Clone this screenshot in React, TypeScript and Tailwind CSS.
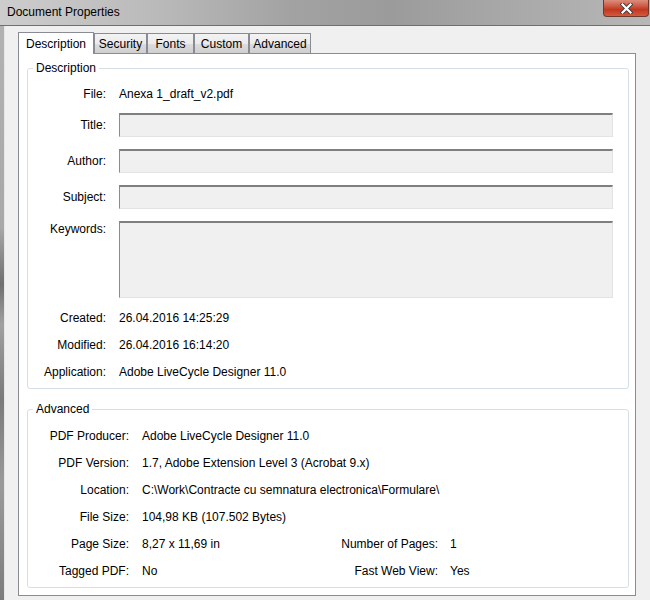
import React from 'react';

const font = "font-['Liberation_Sans',Arial,sans-serif]";

function Tab({ label, w, active }: { label: string; w: string; active?: boolean }) {
  if (active) {
    return (
      <div className={`${w} h-[22px] -mb-px relative z-10 bg-white border border-b-0 border-[#898c95] flex items-center justify-center text-[12px] text-black`}>
        {label}
      </div>
    );
  }
  return (
    <div className={`${w} h-[20px] border border-b-0 border-[#898c95] bg-[linear-gradient(to_bottom,#f3f3f3,#ebebeb_50%,#dddddd_51%,#cfcfcf)] flex items-center justify-center text-[12px] text-black`}>
      {label}
    </div>
  );
}

function Input({ h }: { h: string }) {
  return (
    <div className={`flex-1 ${h} bg-[#f0f0f0] border-t-2 border-l border-r border-b border-t-[#7f7f7f] border-l-[#8c8c8c] border-r-[#e3e3e3] border-b-[#e3e3e3]`} />
  );
}

function Row({ label, labelW, className, children, top }: { label: string; labelW: string; className: string; children: React.ReactNode; top?: boolean }) {
  return (
    <div className={`flex ${top ? 'items-start' : 'items-center'} ${className}`}>
      <div className={`${labelW} text-right shrink-0 leading-[16px]`}>{label}</div>
      {children}
    </div>
  );
}

function Group({ title, className, children }: { title: string; className: string; children: React.ReactNode }) {
  return (
    <fieldset className={`border border-[#d5dfe5] rounded-[3px] ml-[8px] mr-[6px] ${className}`}>
      <legend className="ml-[5px] px-[3px] leading-[16px] text-[12px] text-black">{title}</legend>
      {children}
    </fieldset>
  );
}

export default function App() {
  return (
    <div className={`w-[650px] h-[600px] flex flex-col bg-[#f0f0f0] overflow-hidden text-[12px] text-black ${font}`}>
      {/* title bar */}
      <div className="h-[26px] shrink-0 flex items-start border-b border-[#6f6f6f] bg-[linear-gradient(to_right,#cdcdcd,#b9b9b9_25%,#a2a2a2_45%,#9b9b9b_60%,#a6a6a6_75%,#b7b7b7)]">
        <div className="pl-[7px] leading-[24px] text-[12px] text-black">Document Properties</div>
        <div className="ml-auto mr-[1px] w-[46px] h-[17px] rounded-b-[4px] border border-t-0 border-[#6e3a30] bg-[linear-gradient(to_bottom,#dc8e7c,#cc5741_40%,#c0391f_60%,#d45a3f)] flex items-center justify-center">
          <svg width="13" height="11" viewBox="0 0 13 11">
            <path d="M2.5 1.5 L10.5 9.5 M10.5 1.5 L2.5 9.5" stroke="#3b3b3b" strokeWidth="4" strokeLinecap="square" />
            <path d="M2.5 1.5 L10.5 9.5 M10.5 1.5 L2.5 9.5" stroke="#ffffff" strokeWidth="2.2" strokeLinecap="square" />
          </svg>
        </div>
      </div>

      <div className="flex flex-1">
        {/* window frame edge */}
        <div className="w-[5px] shrink-0 border-r border-[#e6e6e6] bg-[linear-gradient(to_bottom,#b2b2b2,#a8a8a8_35%,#6f6f6f_45%,#a0a0a0_52%,#7a7a7a_65%,#9a9a9a_80%,#7c7c7c)]" />

        <div className="flex-1 pl-[13px] pr-[14px] pt-[6px]">
          <div className="flex items-end h-[21px]">
            <Tab label="Description" w="w-[76px]" active />
            <Tab label="Security" w="w-[53px]" />
            <Tab label="Fonts" w="w-[47px]" />
            <Tab label="Custom" w="w-[55px]" />
            <Tab label="Advanced" w="w-[62px]" />
          </div>

          <div className="h-[543px] bg-white border border-[#898c95] pt-[6px]">
            <Group title="Description" className="pb-[6px]">
              <Row label="File:" labelW="w-[78px]" className="mt-[8px] h-[20px]">
                <div className="ml-[13px]">Anexa 1_draft_v2.pdf</div>
              </Row>
              <Row label="Title:" labelW="w-[78px]" className="mt-[9px] h-[24px] pr-[15px] gap-[13px]">
                <Input h="h-[24px]" />
              </Row>
              <Row label="Author:" labelW="w-[78px]" className="mt-[12px] h-[24px] pr-[15px] gap-[13px]">
                <Input h="h-[24px]" />
              </Row>
              <Row label="Subject:" labelW="w-[78px]" className="mt-[12px] h-[24px] pr-[15px] gap-[13px]">
                <Input h="h-[24px]" />
              </Row>
              <Row label="Keywords:" labelW="w-[78px]" className="mt-[12px] h-[77px] pr-[15px] gap-[13px]" top>
                <Input h="h-[77px]" />
              </Row>
              <Row label="Created:" labelW="w-[78px]" className="mt-[10px] h-[20px]">
                <div className="ml-[13px]">26.04.2016 14:25:29</div>
              </Row>
              <Row label="Modified:" labelW="w-[78px]" className="mt-[7px] h-[20px]">
                <div className="ml-[13px]">26.04.2016 16:14:20</div>
              </Row>
              <Row label="Application:" labelW="w-[78px]" className="mt-[7px] h-[20px]">
                <div className="ml-[13px]">Adobe LiveCycle Designer 11.0</div>
              </Row>
            </Group>

            <Group title="Advanced" className="mt-[12px] pb-[6px]">
              <Row label="PDF Producer:" labelW="w-[101px]" className="mt-[9px] h-[20px]">
                <div className="ml-[13px]">Adobe LiveCycle Designer 11.0</div>
              </Row>
              <Row label="PDF Version:" labelW="w-[101px]" className="mt-[7px] h-[20px]">
                <div className="ml-[13px]">1.7, Adobe Extension Level 3 (Acrobat 9.x)</div>
              </Row>
              <Row label="Location:" labelW="w-[101px]" className="mt-[7px] h-[20px]">
                <div className="ml-[13px] whitespace-nowrap">C:\Work\Contracte cu semnatura electronica\Formulare\</div>
              </Row>
              <Row label="File Size:" labelW="w-[101px]" className="mt-[7px] h-[20px]">
                <div className="ml-[13px]">104,98 KB (107.502 Bytes)</div>
              </Row>
              <Row label="Page Size:" labelW="w-[101px]" className="mt-[7px] h-[20px]">
                <div className="ml-[13px] w-[188px]">8,27 x 11,69 in</div>
                <div className="w-[108px] text-right">Number of Pages:</div>
                <div className="ml-[12px]">1</div>
              </Row>
              <Row label="Tagged PDF:" labelW="w-[101px]" className="mt-[7px] h-[20px]">
                <div className="ml-[13px] w-[188px]">No</div>
                <div className="w-[108px] text-right">Fast Web View:</div>
                <div className="ml-[12px]">Yes</div>
              </Row>
            </Group>
          </div>
        </div>
      </div>
    </div>
  );
}
